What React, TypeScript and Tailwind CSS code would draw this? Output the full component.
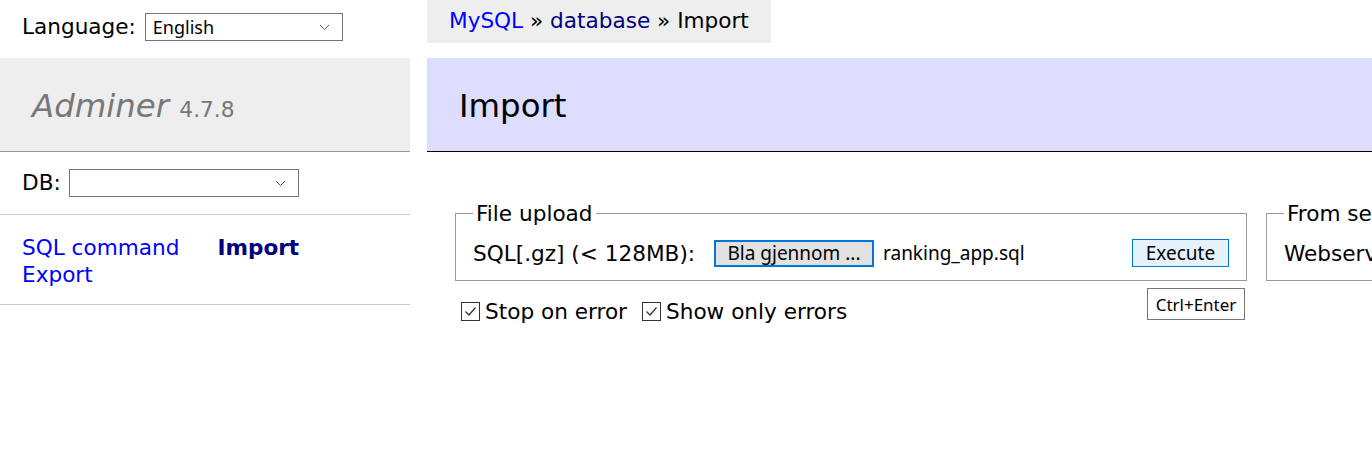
import React from "react";

const ui = { fontFamily: '"Noto Sans", "Open Sans", sans-serif' };

function Chevron() {
  return (
    <svg width="11" height="7" viewBox="0 0 11 7" className="shrink-0">
      <polyline points="1,1 5.5,5.5 10,1" fill="none" stroke="#555" strokeWidth="1" />
    </svg>
  );
}

function Select({ value, width }: { value: string; width: string }) {
  return (
    <div
      className={`flex h-[28px] ${width} items-center justify-between border border-[#767676] bg-white pl-[7px] pr-[12px] text-[18px] leading-[26px] text-black`}
      style={ui}
    >
      <span>{value}</span>
      <Chevron />
    </div>
  );
}

function Check({ label }: { label: string }) {
  return (
    <label className="flex items-center">
      <span className="flex h-[19px] w-[19px] items-center justify-center border border-[#333] bg-white">
        <svg width="13" height="11" viewBox="0 0 13 11">
          <polyline points="1.5,5.5 5,9 11.5,1.5" fill="none" stroke="#333" strokeWidth="1.2" />
        </svg>
      </span>
      <span className="ml-[5px]">{label}</span>
    </label>
  );
}

export default function App() {
  return (
    <div
      className="relative h-[474px] w-full overflow-hidden bg-white text-[21.6px] leading-[27px] text-black"
      style={{ fontFamily: '"DejaVu Sans", Verdana, sans-serif' }}
    >
      <div className="flex">
        {/* menu */}
        <div className="w-[410px] shrink-0">
          <div className="flex h-[58px] items-start gap-[9px] pl-[22px] pt-[13px]">
            <span className="leading-[28px]">Language:</span>
            <Select value="English" width="w-[198px]" />
          </div>
          <h1 className="h-[94px] border-b border-[#999] bg-[#eeeeee] pl-[32px] pt-[28px] text-[32.4px] leading-[40px] text-[#777]">
            <i>Adminer</i> <span className="text-[21.7px]">4.7.8</span>
          </h1>
          <div className="flex h-[63px] items-start gap-[8px] border-b border-[#ccc] pl-[22px] pt-[17px]">
            <span className="leading-[28px]">DB:</span>
            <Select value="" width="w-[230px]" />
          </div>
          <div className="h-[90px] border-b border-[#ccc] pl-[22px] pt-[19px]">
            <div className="flex w-[366px] flex-wrap content-start gap-x-[38px]">
              <a className="text-[#0000ff]">SQL command</a>
              <a className="font-bold text-[#000080]">Import</a>
              <a className="text-[#0000ff]">Export</a>
            </div>
          </div>
        </div>

        {/* content */}
        <div className="min-w-0 flex-1 pl-[17px]">
          <div className="inline-block h-[43px] whitespace-nowrap bg-[#eeeeee] px-[22px] leading-[42px]">
            <a className="text-[#0000ff]">MySQL</a> » <a className="text-[#000080]">database</a> » Import
          </div>
          <h2 className="mt-[15px] h-[94px] border-b border-black bg-[#ddddff] pl-[32px] pt-[28px] text-[32.4px] leading-[40px] font-normal">
            Import
          </h2>

          <div className="pl-[28px]">
            <div className="mt-[48px] flex items-start gap-[19px] whitespace-nowrap">
              <fieldset className="shrink-0 border border-[#999] px-[17px] pb-[12px]">
                <legend className="px-[3px]">File upload</legend>
                <div className="mt-[11px] flex h-[30px] items-center">
                  <span className="inline-block w-[241px]">SQL[.gz] (&lt; 128MB):</span>
                  <span className="flex w-[409px] items-center" style={ui}>
                    <span className="flex h-[27px] w-[160px] items-center justify-center border-2 border-[#0078d7] bg-[#e1e1e1] text-[19px]">
                      Bla gjennom ...
                    </span>
                    <span className="ml-[9px] text-[19px]">ranking_app.sql</span>
                  </span>
                  <span
                    className="ml-[9px] flex h-[28px] w-[97px] items-center justify-center border border-[#0078d7] bg-[#e5f1fb] text-[19px]"
                    style={ui}
                  >
                    Execute
                  </span>
                </div>
              </fieldset>
              <fieldset className="shrink-0 border border-[#999] px-[17px] pb-[12px]">
                <legend className="px-[3px]">From server</legend>
                <div className="mt-[11px] flex h-[30px] items-center">
                  <span>Webserver file adminer.sql.gz</span>
                </div>
              </fieldset>
            </div>

            <div className="mt-[17px] flex h-[27px] items-center gap-[15px] pl-[6px]">
              <Check label="Stop on error" />
              <Check label="Show only errors" />
            </div>
          </div>
        </div>
      </div>

      <div
        className="absolute left-[1147px] top-[288px] flex h-[32px] w-[98px] items-center justify-center border border-[#767676] bg-white text-[17px] text-black"
        style={ui}
      >
        Ctrl+Enter
      </div>
    </div>
  );
}
